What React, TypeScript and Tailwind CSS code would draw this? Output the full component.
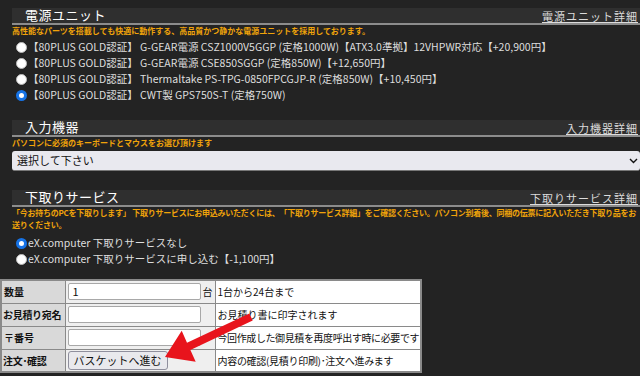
const jp = "font-['Noto_Sans_CJK_JP','Noto_Sans',sans-serif]";

function SectionHead({ title, link }: { title: string; link: string }) {
  return (
    <div className="ml-[12px] h-[17px] bg-[#2f2f2f] border-b-2 border-[#8c8c8c] flex items-center justify-between pl-[13px] pb-[2px]">
      <span className="text-[13px] leading-[13px] text-white tracking-[0.5px]">{title}</span>
      <a className="text-[11px] leading-[12px] text-[#dcdcdc] underline tracking-[1px] mr-[2px] mt-[3px]">{link}</a>
    </div>
  );
}

function Radio({ on }: { on?: boolean }) {
  return on ? (
    <span className="inline-block w-[11px] h-[11px] rounded-full border-[3px] border-[#1673e6] bg-white shrink-0" />
  ) : (
    <span className="inline-block w-[11px] h-[11px] rounded-full bg-white border border-[#bbb] shrink-0" />
  );
}

function Option({ on, text }: { on?: boolean; text: string }) {
  return (
    <div className="flex items-center gap-[1px] h-[16px] pl-[16px]">
      <Radio on={on} />
      <span className="text-[10.5px] leading-[16px] text-[#dedede] whitespace-nowrap">{text}</span>
    </div>
  );
}

const Note = ({ children, tight }: { children: React.ReactNode; tight?: boolean }) => (
  <p
    className={
      tight
        ? "text-[8px] leading-[12px] text-[#f0a30a] font-bold pl-[12px] whitespace-nowrap tracking-[-0.25px]"
        : "text-[8px] leading-[12px] text-[#f0a30a] font-bold pl-[12px] whitespace-nowrap"
    }
  >
    {children}
  </p>
);

const cell = "border border-[#8a8a8a]";

export default function App() {
  return (
    <main className={`relative w-[640px] h-[376px] overflow-hidden bg-[#232323] ${jp}`}>
      <section className="pt-[8px]">
        <SectionHead title="電源ユニット" link="電源ユニット詳細" />
        <Note>高性能なパーツを搭載しても快適に動作する、高品質かつ静かな電源ユニットを採用しております。</Note>
        <div className="pt-[2px]">
          <Option text="【80PLUS GOLD認証】 G-GEAR電源 CSZ1000V5GGP (定格1000W)【ATX3.0準拠】12VHPWR対応【+20,900円】" />
          <Option text="【80PLUS GOLD認証】 G-GEAR電源 CSE850SGGP (定格850W)【+12,650円】" />
          <Option text="【80PLUS GOLD認証】 Thermaltake PS-TPG-0850FPCGJP-R (定格850W)【+10,450円】" />
          <Option on text="【80PLUS GOLD認証】 CWT製 GPS750S-T (定格750W)" />
        </div>
      </section>

      <section className="pt-[17px]">
        <SectionHead title="入力機器" link="入力機器詳細" />
        <Note>パソコンに必須のキーボードとマウスをお選び頂けます</Note>
        <div className="ml-[12px] mt-[2px] h-[20px] bg-[#e9e9ef] rounded-[3px] border-b border-[#777] flex items-center justify-between pl-[5px] pr-[2px]">
          <span className="text-[11px] text-[#111]">選択して下さい</span>
          <svg width="9" height="6" viewBox="0 0 9 6">
            <path d="M1 1l3.5 3.5L8 1" stroke="#111" strokeWidth="1.4" fill="none" />
          </svg>
        </div>
      </section>

      <section className="pt-[19px]">
        <SectionHead title="下取りサービス" link="下取りサービス詳細" />
        <Note tight>
          「今お持ちのPCを下取りします」 下取りサービスにお申込みいただくには、「下取りサービス詳細」をご確認ください。パソコン到着後、同梱の伝票に記入いただき下取り品をお
          <br />
          送りください。
        </Note>
        <div className="pt-[4px]">
          <Option on text="eX.computer 下取りサービスなし" />
          <Option text="eX.computer 下取りサービスに申し込む【-1,100円】" />
        </div>
      </section>

      <table className="mt-[12px] w-[420px] border-collapse border-2 border-[#8a8a8a] text-[10px] text-[#111] table-fixed">
        <colgroup>
          <col className="w-[64px]" />
          <col className="w-[150px]" />
          <col className="w-[206px]" />
        </colgroup>
        <tbody>
          <tr className="h-[23px]">
            <th className={`bg-[#d9d9d9] ${cell} text-left pl-[2px] font-bold`}>数量</th>
            <td className={`bg-[#efefef] ${cell} pl-[2px]`}>
              <div className="flex items-center gap-[2px]">
                <span className="w-[133px] h-[17px] bg-white border border-[#a8a8a8] rounded-[2px] pl-[4px] leading-[15px] text-[11px]">1</span>
                <span>台</span>
              </div>
            </td>
            <td className={`bg-white ${cell} pl-[2px]`}>1台から24台まで</td>
          </tr>
          <tr className="h-[23px]">
            <th className={`bg-[#d9d9d9] ${cell} text-left pl-[1px] font-bold whitespace-nowrap tracking-[-0.3px]`}>お見積り宛名</th>
            <td className={`bg-[#efefef] ${cell} pl-[2px]`}>
              <span className="block w-[133px] h-[17px] bg-white border border-[#a8a8a8] rounded-[2px]" />
            </td>
            <td className={`bg-white ${cell} pl-[2px]`}>お見積り書に印字されます</td>
          </tr>
          <tr className="h-[23px]">
            <th className={`bg-[#d9d9d9] ${cell} text-left pl-[2px] font-bold`}>〒番号</th>
            <td className={`bg-[#efefef] ${cell} pl-[2px]`}>
              <span className="block w-[133px] h-[17px] bg-white border border-[#a8a8a8] rounded-[2px]" />
            </td>
            <td className={`bg-white ${cell} pl-[2px] whitespace-nowrap tracking-[-0.4px]`}>今回作成した御見積を再度呼出す時に必要です</td>
          </tr>
          <tr className="h-[23px]">
            <th className={`bg-[#d9d9d9] ${cell} text-left pl-[1px] font-bold whitespace-nowrap tracking-[-0.3px]`}>注文･確認</th>
            <td className={`bg-[#efefef] ${cell} pl-[2px]`}>
              <button className="h-[19px] px-[5px] bg-[#e9e9ed] border border-[#8f8f9d] rounded-[3px] text-[11px] leading-[17px]">バスケットへ進む</button>
            </td>
            <td className={`bg-white ${cell} pl-[2px] whitespace-nowrap tracking-[-0.3px]`}>内容の確認(見積り印刷)･注文へ進みます</td>
          </tr>
        </tbody>
      </table>

      <svg className="absolute inset-0 pointer-events-none" width="640" height="376" viewBox="0 0 640 376">
        <polygon
          points="252.7,320.6 249.3,313.4 187,342.7 181.7,330.8 165,357 195.7,361.8 190.4,349.9"
          fill="#e8141c"
        />
      </svg>
    </main>
  );
}
